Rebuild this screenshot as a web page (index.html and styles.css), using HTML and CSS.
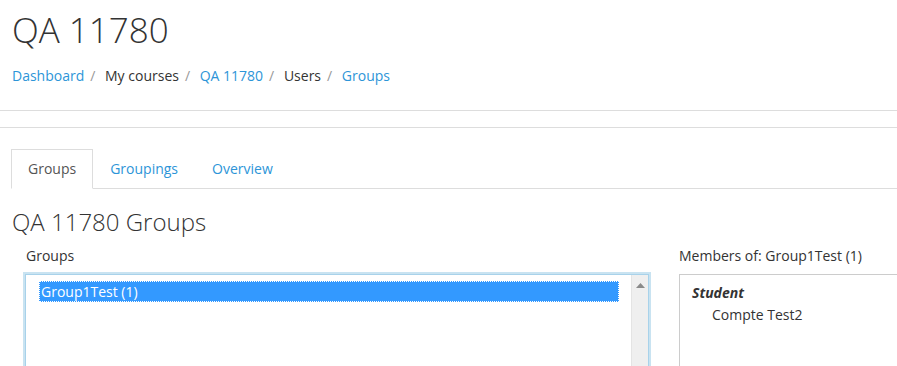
FILE: index.html
```html
<!DOCTYPE html>
<html lang="en">
<head>
  <meta charset="UTF-8" />
  <title>QA 11780: Groups</title>
  <link rel="stylesheet" href="styles.css">
</head>
<body>
<div class="page-header">
  <h1 class="course-title">QA 11780</h1>
  <nav class="breadcrumb">
    <a href="#">Dashboard</a><span class="sep">/</span>
    <span>My courses</span><span class="sep">/</span>
    <a href="#">QA 11780</a><span class="sep">/</span>
    <span>Users</span><span class="sep">/</span>
    <a href="#">Groups</a>
  </nav>
</div>
<div class="nav-rule"></div>
<div class="nav-rule second"></div>

<div class="content">
  <ul class="tabs">
    <li class="tab active">Groups</li>
    <li class="tab"><a href="#">Groupings</a></li>
    <li class="tab"><a href="#">Overview</a></li>
  </ul>

  <h2 class="page-title">QA 11780 Groups</h2>

  <div class="groups-form">
    <div class="groups-col">
      <label class="field-label">Groups</label>
      <div class="listbox">
        <div class="listbox-items">
          <div class="option selected">Group1Test (1)</div>
        </div>
        <div class="scrollbar">
          <svg width="9" height="5" viewBox="0 0 9 5"><path d="M0 5 L4.5 0 L9 5 Z" fill="#8a8a8a"/></svg>
        </div>
      </div>
    </div>
    <div class="members-col">
      <label class="field-label">Members of: Group1Test (1)</label>
      <div class="members-box">
        <div class="role">Student</div>
        <div class="member">Compte Test2</div>
      </div>
    </div>
  </div>
</div>
</body>
</html>
```

FILE: styles.css
```css
html, body {
  margin: 0;
  background: #fff;
  overflow: hidden;
}
body {
  font-family: "Open Sans", "Noto Sans", sans-serif;
  color: #333;
  font-size: 14px;
}
a {
  color: #2d95d8;
  text-decoration: none;
}

.page-header {
  padding: 8px 12px 0;
}
.course-title {
  margin: 0;
  font-size: 35px;
  font-weight: 300;
  line-height: 44px;
  color: #333;
}
.breadcrumb {
  margin-top: 14px;
  font-size: 14px;
  line-height: 20px;
}
.breadcrumb .sep {
  color: #999;
  padding: 0 6px;
}

.nav-rule {
  margin-top: 24px;
  border-top: 1px solid #ddd;
}
.nav-rule.second {
  margin-top: 16px;
}

.content {
  padding: 21px 0 0 11px;
}
.tabs {
  display: flex;
  margin: 0;
  padding: 0;
  list-style: none;
  border-bottom: 1px solid #ddd;
}
.tab {
  padding: 0 16px;
  line-height: 38px;
  font-size: 14px;
  border: 1px solid transparent;
  border-bottom: none;
  margin-bottom: -1px;
}
.tab.active {
  border-color: #ddd;
  background: #fff;
  color: #555;
  padding: 0 16px;
  border-bottom: 1px solid #fff;
}

.page-title {
  margin: 18px 0 0 1px;
  font-size: 24px;
  font-weight: 300;
  line-height: 30px;
  color: #333;
}

.groups-form {
  display: flex;
  margin-top: 8px;
}
.field-label {
  display: block;
  font-size: 14px;
  line-height: 22px;
}
.groups-col {
  width: 628px;
  padding-left: 12px;
}
.groups-col .field-label {
  padding-left: 3px;
}
.listbox {
  display: flex;
  height: 100px;
  margin-top: 7px;
  border: 1px solid #a8d2ea;
  box-shadow: 0 0 0 2px #c9e3f1;
  margin-left: 2px;
  width: 622px;
}
.listbox-items {
  flex: 1;
  padding: 6px 12px 0 13px;
}
.option {
  font-size: 14px;
  line-height: 21px;
  padding: 0 2px;
}
.option.selected {
  background: #3399ff;
  color: #fff;
  outline: 1px dotted #fff;
  outline-offset: -1px;
}
.scrollbar {
  width: 16px;
  background: #efefef;
  border-left: 1px solid #e4e4e4;
  display: flex;
  justify-content: center;
  padding-top: 8px;
}
.scrollbar svg {
  display: block;
}

.members-col {
  margin-left: 30px;
  width: 260px;
}
.members-box {
  margin-top: 7px;
  border: 1px solid #ccc;
  height: 100px;
  width: 260px;
  padding: 7px 12px;
}
.role {
  font-weight: bold;
  font-style: italic;
  line-height: 22px;
}
.member {
  padding-left: 20px;
  line-height: 22px;
}
```
